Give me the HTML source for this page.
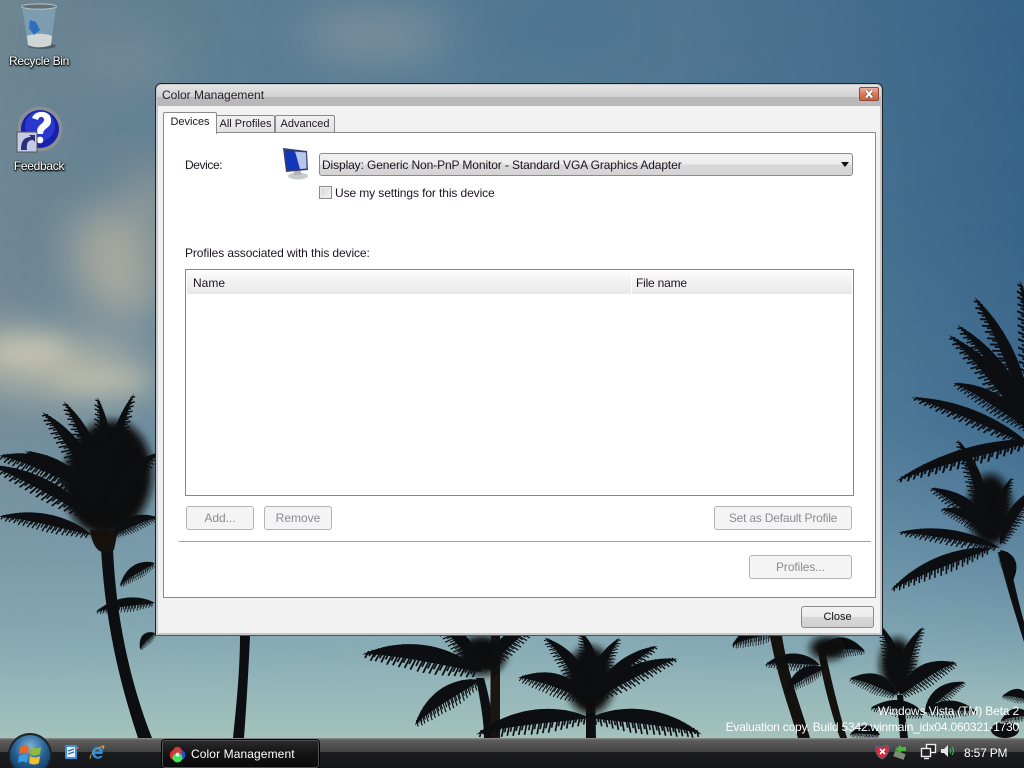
<!DOCTYPE html>
<html>
<head>
<meta charset="utf-8">
<title>Color Management</title>
<style>
html,body{margin:0;padding:0;width:1024px;height:768px;overflow:hidden;background:#4f7692;}
body{position:relative;font-family:"Liberation Sans",sans-serif;font-size:12px;color:#1c1520;}
.a{position:absolute;white-space:nowrap;line-height:14px;}
.bg{position:absolute;left:0;top:0;}
.dl{color:#fff;text-shadow:0 1px 1px #000,1px 1px 2px #000,0 0 2px #000;font-size:12px;text-align:center;letter-spacing:-.3px;}
.win{position:absolute;left:155px;top:83px;width:726px;height:551px;border:1px solid #1f2226;border-bottom-color:#50545a;border-radius:6px 6px 0 0;background:#f2f2f2;box-shadow:inset 0 0 0 2px #c8c8c8;}
.title{position:absolute;left:1px;top:1px;width:724px;height:21px;border-radius:5px 5px 0 0;background:linear-gradient(#e4e4e4 0,#d0d0d0 12px,#b9b9b9 12px,#b9b9b9 100%);}
.close{position:absolute;left:703px;top:3px;width:18px;height:12px;border:1px solid #8b4a38;border-radius:2px;background:linear-gradient(#e9b09a,#d87a58 50%,#c9603c);color:#fff;text-align:center;}
.pane{position:absolute;left:163px;top:132px;width:711px;height:464px;border:1px solid #8a8a8e;background:#fff;}
.tab{position:absolute;border:1px solid #8a8a8e;border-bottom:0;border-radius:2px 2px 0 0;background:linear-gradient(#f2f2f2,#e0e0e0);text-align:center;line-height:17px;font-size:11px;}
.btn{position:absolute;box-sizing:border-box;border:1px solid #b2b5b8;border-radius:3px;background:#f4f4f4;color:#8b8b90;text-align:center;}
.combo{position:absolute;left:319px;top:153px;width:532px;height:21px;border:1px solid #8a8a8a;border-radius:3px;background:linear-gradient(#f1f1f1 0,#ededed 50%,#d9d9d9 50%,#d4d4d4 100%);}
.list{position:absolute;left:185px;top:269px;width:667px;height:225px;border:1px solid #85858a;background:#fff;}
.task{position:absolute;left:0;top:738px;width:1024px;height:30px;background:linear-gradient(#8d8d8d 0,#7a7a7a 1px,#5e5e5e 2px,#414141 14px,#1b1d1f 14px,#15171a 100%);}
.tb{position:absolute;left:162px;top:740px;width:155px;height:26px;border:1px solid #4e5052;border-radius:3px;background:linear-gradient(#2a2a2a,#131313 50%,#0a0a0a);box-shadow:0 0 0 1px #000;}
</style>
</head>
<body>
<svg class="bg" width="1024" height="768" viewBox="0 0 1024 768" xmlns="http://www.w3.org/2000/svg">
<defs>
<linearGradient id="sky" x1="0" y1="0" x2="0" y2="1">
<stop offset="0" stop-color="#567a92"/><stop offset=".3" stop-color="#5a7f98"/><stop offset=".6" stop-color="#6f96ac"/><stop offset=".85" stop-color="#8cafb8"/><stop offset=".96" stop-color="#a3c2bc"/>
</linearGradient>
<linearGradient id="dark" x1="0" y1="0" x2="1" y2="0">
<stop offset="0" stop-color="#7a8b92" stop-opacity=".7"/><stop offset=".45" stop-color="#557a93" stop-opacity=".15"/><stop offset="1" stop-color="#2a5a84" stop-opacity=".75"/>
</linearGradient>
<linearGradient id="mg" x1="0" y1="0" x2="0" y2="1"><stop offset="0" stop-color="#fff"/><stop offset=".55" stop-color="#fff" stop-opacity=".9"/><stop offset=".9" stop-color="#fff" stop-opacity="0"/></linearGradient>
<mask id="m"><rect width="1024" height="768" fill="url(#mg)"/></mask>
<filter id="b" x="-60%" y="-60%" width="220%" height="220%"><feGaussianBlur stdDeviation="22"/></filter>
<filter id="b2" x="-40%" y="-40%" width="180%" height="180%"><feGaussianBlur stdDeviation="10"/></filter>
<filter id="b3" x="-30%" y="-30%" width="160%" height="160%"><feGaussianBlur stdDeviation="4"/></filter>
<g id="f">
<path d="M0,0 C25,-20 65,-24 100,8 C75,0 35,2 0,0Z"/>
<path fill="none" stroke="#0c0e11" stroke-width="1.5" d="M4 -3l2 10M8 -5.5l3 14M12 -8l4 17M17 -10l4 20M21 -12l5 23M26 -13l5 25M31 -14l6 27M36 -15l6 28M41 -15.5l6 29M46 -15.5l6 29M52 -15l6 28M57 -14.4l6 27M62 -13l6 26M68 -11.6l5 24M73 -9l5 22M79 -7l4 19M84 -4l4 16M89 -.5l3 13M95 3l2 8M6 -4l2 8M10 -7l3 11M14 -9l4 14M19 -11l4 17M24 -12.5l4 19M29 -13.5l5 21M34 -14.5l5 22M39 -15l5 23M44 -15.5l5 23M49 -15l5 23M55 -14.5l5 22M60 -13.5l5 21M65 -12l5 20M71 -10l4 18M76 -8l4 16M82 -5l3 13M87 -2l3 10M92 1l2 7"/>
</g>
</defs>
<rect width="1024" height="768" fill="url(#sky)"/>
<rect width="1024" height="768" fill="url(#dark)" mask="url(#m)"/>
<g filter="url(#b)">
<ellipse cx="50" cy="365" rx="110" ry="28" fill="#cfc7ae" opacity=".8" transform="rotate(8 50 365)"/>
<ellipse cx="115" cy="265" rx="40" ry="60" fill="#bdb5a2" opacity=".75" transform="rotate(-25 115 265)"/>
<ellipse cx="150" cy="200" rx="25" ry="40" fill="#b0aa9b" opacity=".55"/>
<ellipse cx="130" cy="60" rx="60" ry="25" fill="#8b9aa0" opacity=".35"/>
<ellipse cx="375" cy="35" rx="75" ry="30" fill="#a8acaa" opacity=".4"/>
<ellipse cx="560" cy="30" rx="70" ry="25" fill="#3f6d92" opacity=".4"/>
</g>
<g filter="url(#b2)">
<ellipse cx="30" cy="350" rx="38" ry="14" fill="#d6d0bc" opacity=".55"/>
<ellipse cx="100" cy="382" rx="50" ry="7" fill="#d0cab4" opacity=".6"/>
</g>
<g fill="#0c0e11">
<!-- left palm -->
<path d="M101,548 C104,600 112,660 138,738 L152,738 C125,670 115,600 113,548 Z"/>
<ellipse cx="108" cy="478" rx="44" ry="58" transform="rotate(8 108 478)" filter="url(#b3)"/>
<path d="M90,530 C92,545 98,552 103,552 L114,550 L118,530 Z" fill="#17110d"/>
<use href="#f" transform="translate(92,535) rotate(14) scale(-.95,.62)"/>
<use href="#f" transform="translate(95,520) rotate(30) scale(-1.2,.72)"/>
<use href="#f" transform="translate(92,492) rotate(25) scale(-1,.85)"/>
<use href="#f" transform="translate(100,510) rotate(42) scale(-.95,.8)"/>
<use href="#f" transform="translate(100,500) rotate(60) scale(-1.05,.75)"/>
<use href="#f" transform="translate(105,500) rotate(70) scale(-1.07,.65)"/>
<use href="#f" transform="translate(102,497) rotate(90) scale(-1,.6)"/>
<use href="#f" transform="translate(108,495) rotate(-78) scale(1.05,.55)"/>
<use href="#f" transform="translate(105,510) rotate(-50) scale(.8,.7)"/>
<use href="#f" transform="translate(112,535) rotate(-25) scale(.5,.55)"/>
<use href="#f" transform="translate(155,563) rotate(-28) scale(-.42,.5)"/>
<use href="#f" transform="translate(155,603) rotate(-5) scale(-.6,.5)"/>
<use href="#f" transform="translate(155,633) rotate(-40) scale(-.22,.4)"/>
<!-- right palms -->
<use href="#f" transform="translate(1030,445) rotate(24) scale(-1.28,.6)"/>
<use href="#f" transform="translate(1030,430) rotate(52) scale(-1.25,.7)"/>
<use href="#f" transform="translate(1030,420) rotate(55) scale(-1.2,.65)"/>
<use href="#f" transform="translate(1030,420) rotate(68) scale(-1.35,.7)"/>
<use href="#f" transform="translate(1030,430) rotate(35) scale(-.9,.7)"/>
<use href="#f" transform="translate(1030,420) rotate(88) scale(-1.4,.7)"/>
<use href="#f" transform="translate(1040,440) rotate(-14) scale(-1.5,.65)"/>
<path d="M998,552 C1006,585 1014,610 1024,642 L1024,622 C1018,600 1012,575 1008,552 Z"/>
<ellipse cx="990" cy="510" rx="22" ry="36" filter="url(#b3)"/>
<use href="#f" transform="translate(1000,548) rotate(11) scale(-1.03,.55)"/>
<use href="#f" transform="translate(995,535) rotate(40) scale(-.8,.7)"/>
<use href="#f" transform="translate(995,535) rotate(30) scale(-.6,.6)"/>
<use href="#f" transform="translate(985,525) rotate(75) scale(-.9,.6)"/>
<use href="#f" transform="translate(992,548) rotate(-20) scale(-1.1,.65)"/>
<use href="#f" transform="translate(1000,545) rotate(-60) scale(.7,.6)"/>
<use href="#f" transform="translate(995,540) rotate(-78) scale(.65,.5)"/>
<use href="#f" transform="translate(1000,550) rotate(62) scale(.34,.55)"/>
<!-- bottom center -->
<path d="M240,636 L250,636 C248,680 246,710 244,738 L233,738 C236,710 240,670 240,636 Z"/>
<path d="M476,678 L484,678 C490,700 494,720 492,738 L484,738 C484,720 480,700 476,678 Z"/>
<path d="M491,636 L500,636 L500,738 L490,738 Z" fill="#1c1613"/>
<ellipse cx="482" cy="655" rx="24" ry="20" filter="url(#b3)"/>
<use href="#f" transform="translate(481,672) rotate(12) scale(-1.2,.95)"/>
<use href="#f" transform="translate(481,680) rotate(-30) scale(-.8,.8)"/>
<use href="#f" transform="translate(482,672) rotate(50) scale(-.8,.7)"/>
<use href="#f" transform="translate(485,670) rotate(-45) scale(.8,.7)"/>
<path d="M586,690 L595,690 L596,738 L586,738 Z"/>
<ellipse cx="590" cy="680" rx="24" ry="34" filter="url(#b3)"/>
<use href="#f" transform="translate(590,700) rotate(22) scale(-.75,.8)"/>
<use href="#f" transform="translate(590,700) rotate(58) scale(-.77,.7)"/>
<use href="#f" transform="translate(590,690) rotate(85) scale(-.6,.6)"/>
<use href="#f" transform="translate(592,700) rotate(-70) scale(.68,.6)"/>
<use href="#f" transform="translate(592,700) rotate(-29) scale(.95,.7)"/>
<use href="#f" transform="translate(592,700) rotate(-43) scale(.85,.65)"/>
<use href="#f" transform="translate(590,718) rotate(-5) scale(-1.15,.85)"/>
<use href="#f" transform="translate(590,718) rotate(5) scale(1.13,.85)"/>
<!-- bottom right -->
<path d="M770,636 L782,636 C788,675 802,710 810,738 L798,738 C790,710 778,680 770,636 Z" fill="#14110f"/>
<path d="M818,650 L825,650 C831,680 840,715 847,738 L840,738 C832,715 822,680 818,650 Z" fill="#14110f"/>
<use href="#f" transform="translate(780,632) rotate(-10) scale(-.5,.7)"/>
<use href="#f" transform="translate(820,665) rotate(5) scale(-.55,.6)"/>
<use href="#f" transform="translate(825,668) rotate(-25) scale(-.45,.6)"/>
<use href="#f" transform="translate(820,650) rotate(-5) scale(.45,.7)"/>
<ellipse cx="828" cy="648" rx="18" ry="12" filter="url(#b3)"/>
<path d="M897,695 L903,695 L908,738 L900,738 Z"/>
<ellipse cx="897" cy="665" rx="17" ry="27" filter="url(#b3)"/>
<use href="#f" transform="translate(900,695) rotate(-35) scale(.65,.8)"/>
<use href="#f" transform="translate(900,695) rotate(-75) scale(.72,.6)"/>
<use href="#f" transform="translate(897,695) rotate(80) scale(-.72,.6)"/>
<use href="#f" transform="translate(897,695) rotate(25) scale(-.5,.7)"/>
<use href="#f" transform="translate(925,712) rotate(-5) scale(.52,.6)"/>
<use href="#f" transform="translate(925,712) rotate(-42) scale(.5,.6)"/>
<use href="#f" transform="translate(925,715) rotate(12) scale(-.55,.6)"/>
<use href="#f" transform="translate(880,735) rotate(8) scale(-.3,.5)"/>
<use href="#f" transform="translate(1030,700) rotate(15) scale(-.28,.5)"/>
<use href="#f" transform="translate(1030,715) rotate(-5) scale(-.3,.5)"/>
<ellipse cx="1005" cy="730" rx="14" ry="8"/>
</g>
<!-- recycle bin -->
<g>
<ellipse cx="42" cy="46" rx="14" ry="3" fill="#2d3a42" opacity=".5"/>
<path d="M22,7 L56,7 L51,45 C44,48 33,48 28,45 Z" fill="#7f9eb2" opacity=".9"/>
<path d="M27,36 C34,33 45,33 52,36 L51,45 C44,48 33,48 28,45 Z" fill="#d0d6d6"/>
<ellipse cx="39" cy="6.5" rx="17.5" ry="2.6" fill="#5f6f78" stroke="#b9c4c8" stroke-width="1"/>
<path d="M30,20 L36,22 L40,30 L34,35 L29,28 Z" fill="#2c6fc0"/>
</g>
<!-- feedback -->
<g>
<circle cx="40" cy="129" r="22.5" fill="#8a8f95"/>
<circle cx="40" cy="129" r="19" fill="#1620a8"/>
<circle cx="40" cy="126" r="15" fill="#2a38d0"/>
<path d="M32,118 C35,109 52,110 51,121 C51,128 43,128 43,134 L37,134 C36,124 45,124 44,119 C43,116 39,116 38,120 Z" fill="#fff"/>
<circle cx="40" cy="140" r="3.4" fill="#fff"/>
<rect x="17" y="132" width="20" height="20" fill="#c5cbe4" stroke="#555" stroke-width="1"/>
<path d="M21,150 C21,140 25,137 31,137 L29,135 L35,135 L35,142 L33,140 C28,140 26,143 27,150 Z" fill="#2a2f7a"/>
</g>
</svg>

<div class="a dl" style="left:0;top:54px;width:78px;">Recycle Bin</div>
<div class="a dl" style="left:0;top:159px;width:78px;">Feedback</div>
<div class="a" style="right:5px;top:704px;color:#fff;letter-spacing:-.16px;">Windows Vista (TM) Beta 2</div>
<div class="a" style="right:5px;top:720px;color:#fff;letter-spacing:-.2px;">Evaluation copy. Build 5342.winmain_idx04.060321-1730</div>

<div class="win">
  <div class="title"></div>
  <div class="close"><svg width="18" height="12" viewBox="0 0 18 12" style="display:block"><path d="M6,2.5 L12,9.5 M12,2.5 L6,9.5" stroke="#6a4a40" stroke-width="3.6"/><path d="M6,2.5 L12,9.5 M12,2.5 L6,9.5" stroke="#fff" stroke-width="2.2"/></svg></div>
</div>
<div class="a" style="left:162px;top:88px;color:#2a2230;">Color Management</div>

<div class="tab" style="left:216px;top:115px;width:57px;height:17px;">All Profiles</div>
<div class="tab" style="left:275px;top:115px;width:58px;height:17px;">Advanced</div>
<div class="pane"></div>
<div class="tab" style="left:163px;top:112px;width:52px;height:21px;background:#fff;line-height:19px;z-index:2;">Devices</div>

<div class="a" style="left:185px;top:158px;letter-spacing:-.4px;">Device:</div>
<svg class="a" style="left:281px;top:146px;" width="32" height="34" viewBox="0 0 32 34">
<path d="M2,2 L26,5 L27,24 L5,26 Z" fill="#35406a"/>
<path d="M4,4 L25,6.5 L25.5,22.5 L6,24.5 Z" fill="#1137b8"/>
<path d="M14,5.5 L25,6.5 L25.5,22.5 L19,23 Z" fill="#b8c6ec"/>
<ellipse cx="17" cy="30" rx="10" ry="3.6" fill="#c9cccc"/>
<rect x="13" y="25" width="7" height="4" fill="#b0b4b4"/>
</svg>
<div class="combo"></div>
<div class="a" style="left:322px;top:158px;letter-spacing:-.11px;">Display: Generic Non-PnP Monitor - Standard VGA Graphics Adapter</div>
<svg class="a" style="left:840px;top:162px;" width="10" height="6"><path d="M1,0 L9,0 L5,5 Z" fill="#111"/></svg>
<div class="a" style="left:319px;top:186px;width:11px;height:11px;border:1px solid #8a8a8a;background:linear-gradient(135deg,#d5d5d5,#f4f4f4);box-shadow:inset 0 0 0 1px #eee;"></div>
<div class="a" style="left:335px;top:186px;letter-spacing:-.1px;">Use my settings for this device</div>
<div class="a" style="left:185px;top:246px;letter-spacing:-.11px;">Profiles associated with this device:</div>

<div class="list">
  <div style="position:absolute;left:1px;top:1px;width:665px;height:23px;background:linear-gradient(#fdfdfd,#f1f1f1 50%,#e9e9e9);"></div>
  <div style="position:absolute;left:445px;top:1px;width:1px;height:23px;background:#fff;"></div>
</div>
<div class="a" style="left:193px;top:276px;">Name</div>
<div class="a" style="left:636px;top:276px;letter-spacing:-.2px;">File name</div>

<div class="btn" style="left:186px;top:506px;width:68px;height:24px;line-height:22px;">Add...</div>
<div class="btn" style="left:264px;top:506px;width:68px;height:24px;line-height:22px;">Remove</div>
<div class="btn" style="left:714px;top:506px;width:138px;height:24px;line-height:22px;letter-spacing:-.2px;">Set as Default Profile</div>
<div class="a" style="left:179px;top:541px;width:692px;height:1px;background:#a0a0a4;"></div>
<div class="btn" style="left:749px;top:555px;width:103px;height:24px;line-height:22px;letter-spacing:-.1px;">Profiles...</div>
<div class="btn" style="left:801px;top:606px;width:73px;height:22px;line-height:20px;font-size:11px;border-color:#8c8c8c;color:#111;background:linear-gradient(#f2f2f2,#ebebeb 50%,#d8d8d8 50%,#cfcfcf);">Close</div>

<div class="task"></div>
<svg class="a" style="left:6px;top:732px;" width="48" height="36" viewBox="0 0 48 36">
<defs><radialGradient id="orb" cx=".5" cy=".3" r=".8"><stop offset="0" stop-color="#7fb4d8"/><stop offset=".5" stop-color="#245f92"/><stop offset="1" stop-color="#0b2c4a"/></radialGradient></defs>
<circle cx="24" cy="23" r="22" fill="#1c2226"/>
<circle cx="24" cy="23" r="20" fill="url(#orb)"/>
<path d="M14,15 C18,13 20,13 23,15 L22,22 C19,20 16,20 13,22 Z" fill="#e8652e"/>
<path d="M25,15 C28,17 31,17 35,15 L34,22 C31,24 27,24 24,22 Z" fill="#8cbc3c"/>
<path d="M13,24 C16,22 19,22 22,24 L21,31 C18,29 15,29 12,31 Z" fill="#3b9ce0"/>
<path d="M24,24 C27,26 31,26 34,24 L33,31 C30,33 26,33 23,31 Z" fill="#f0c030"/>
</svg>
<svg class="a" style="left:63px;top:744px;" width="16" height="16" viewBox="0 0 16 16"><rect x="2" y="1" width="12" height="14" rx="1" fill="#3b8fdf"/><rect x="4" y="3" width="8" height="10" fill="#e8f2fb"/><path d="M5,7 L11,5 M5,10 L11,8" stroke="#2a6cb0" stroke-width="1.2"/><circle cx="14.5" cy="4" r="1.2" fill="#e8602c"/></svg>
<svg class="a" style="left:88px;top:744px;" width="18" height="17" viewBox="0 0 18 17"><path d="M4,8.5 C4,4 8,2 11,3 C15,4 15,8 14.5,10 L7,10 C7.5,13 11,13.5 13,11.5 L14.5,12.5 C11,16.5 4,15 4,8.5 Z M7,7.5 L11.5,7.5 C11,4.5 7.5,4.5 7,7.5 Z" fill="#2b8fe0"/><path d="M2,15 C0,11 8,4 16,1 C17,3 16,5 15,6 C16,3 13,2.5 8,6 C4,9 2,12 3,14 Z" fill="#c9a028"/></svg>
<div class="tb"></div>
<svg class="a" style="left:169px;top:746px;" width="17" height="17" viewBox="0 0 17 17"><circle cx="5.8" cy="9" r="5.2" fill="#e02838"/><circle cx="11.2" cy="9" r="5.2" fill="#2850d8"/><circle cx="8.5" cy="11.5" r="5" fill="#3ce85a"/><circle cx="8.5" cy="5.2" r="4.4" fill="#c8403c"/><circle cx="8.5" cy="8.6" r="2" fill="#e8e8e8"/></svg>
<div class="a" style="left:191px;top:747px;color:#fff;letter-spacing:.1px;">Color Management</div>

<svg class="a" style="left:875px;top:744px;" width="34" height="16" viewBox="0 0 34 16">
<path d="M1,2 C4,3 8,3 12,1 L14,3 C14,9 11,13 7,15 C3,13 0,9 1,2 Z" fill="#d82838" stroke="#5a5f80" stroke-width="1"/>
<path d="M5,5 L10,10 M10,5 L5,10" stroke="#fff" stroke-width="1.6"/>
<rect x="19" y="8" width="11" height="6" fill="#80887c" transform="rotate(20 24 11)"/>
<path d="M20,5 L26,1 L26,3 L31,3 L31,7 L26,7 L26,9 Z" fill="#46b83c"/>
</svg>
<svg class="a" style="left:920px;top:743px;" width="38" height="17" viewBox="0 0 38 17">
<rect x="6.5" y="1.5" width="9" height="8" fill="#222" stroke="#eee" stroke-width="1.4"/>
<rect x="1.5" y="5.5" width="9" height="8" fill="#222" stroke="#eee" stroke-width="1.4"/>
<path d="M4,15.5 L9,15.5" stroke="#eee" stroke-width="1.4"/>
<path d="M21,6 L24,6 L28,2 L28,14 L24,10 L21,10 Z" fill="#e4e6ea"/>
<path d="M30,5.5 C31,7 31,9 30,10.5 M32,4 C34,7 34,9 32,12" stroke="#48c060" stroke-width="1" fill="none"/>
</svg>
<div class="a" style="left:964px;top:746px;color:#fff;letter-spacing:-.2px;">8:57 PM</div>
</body>
</html>
